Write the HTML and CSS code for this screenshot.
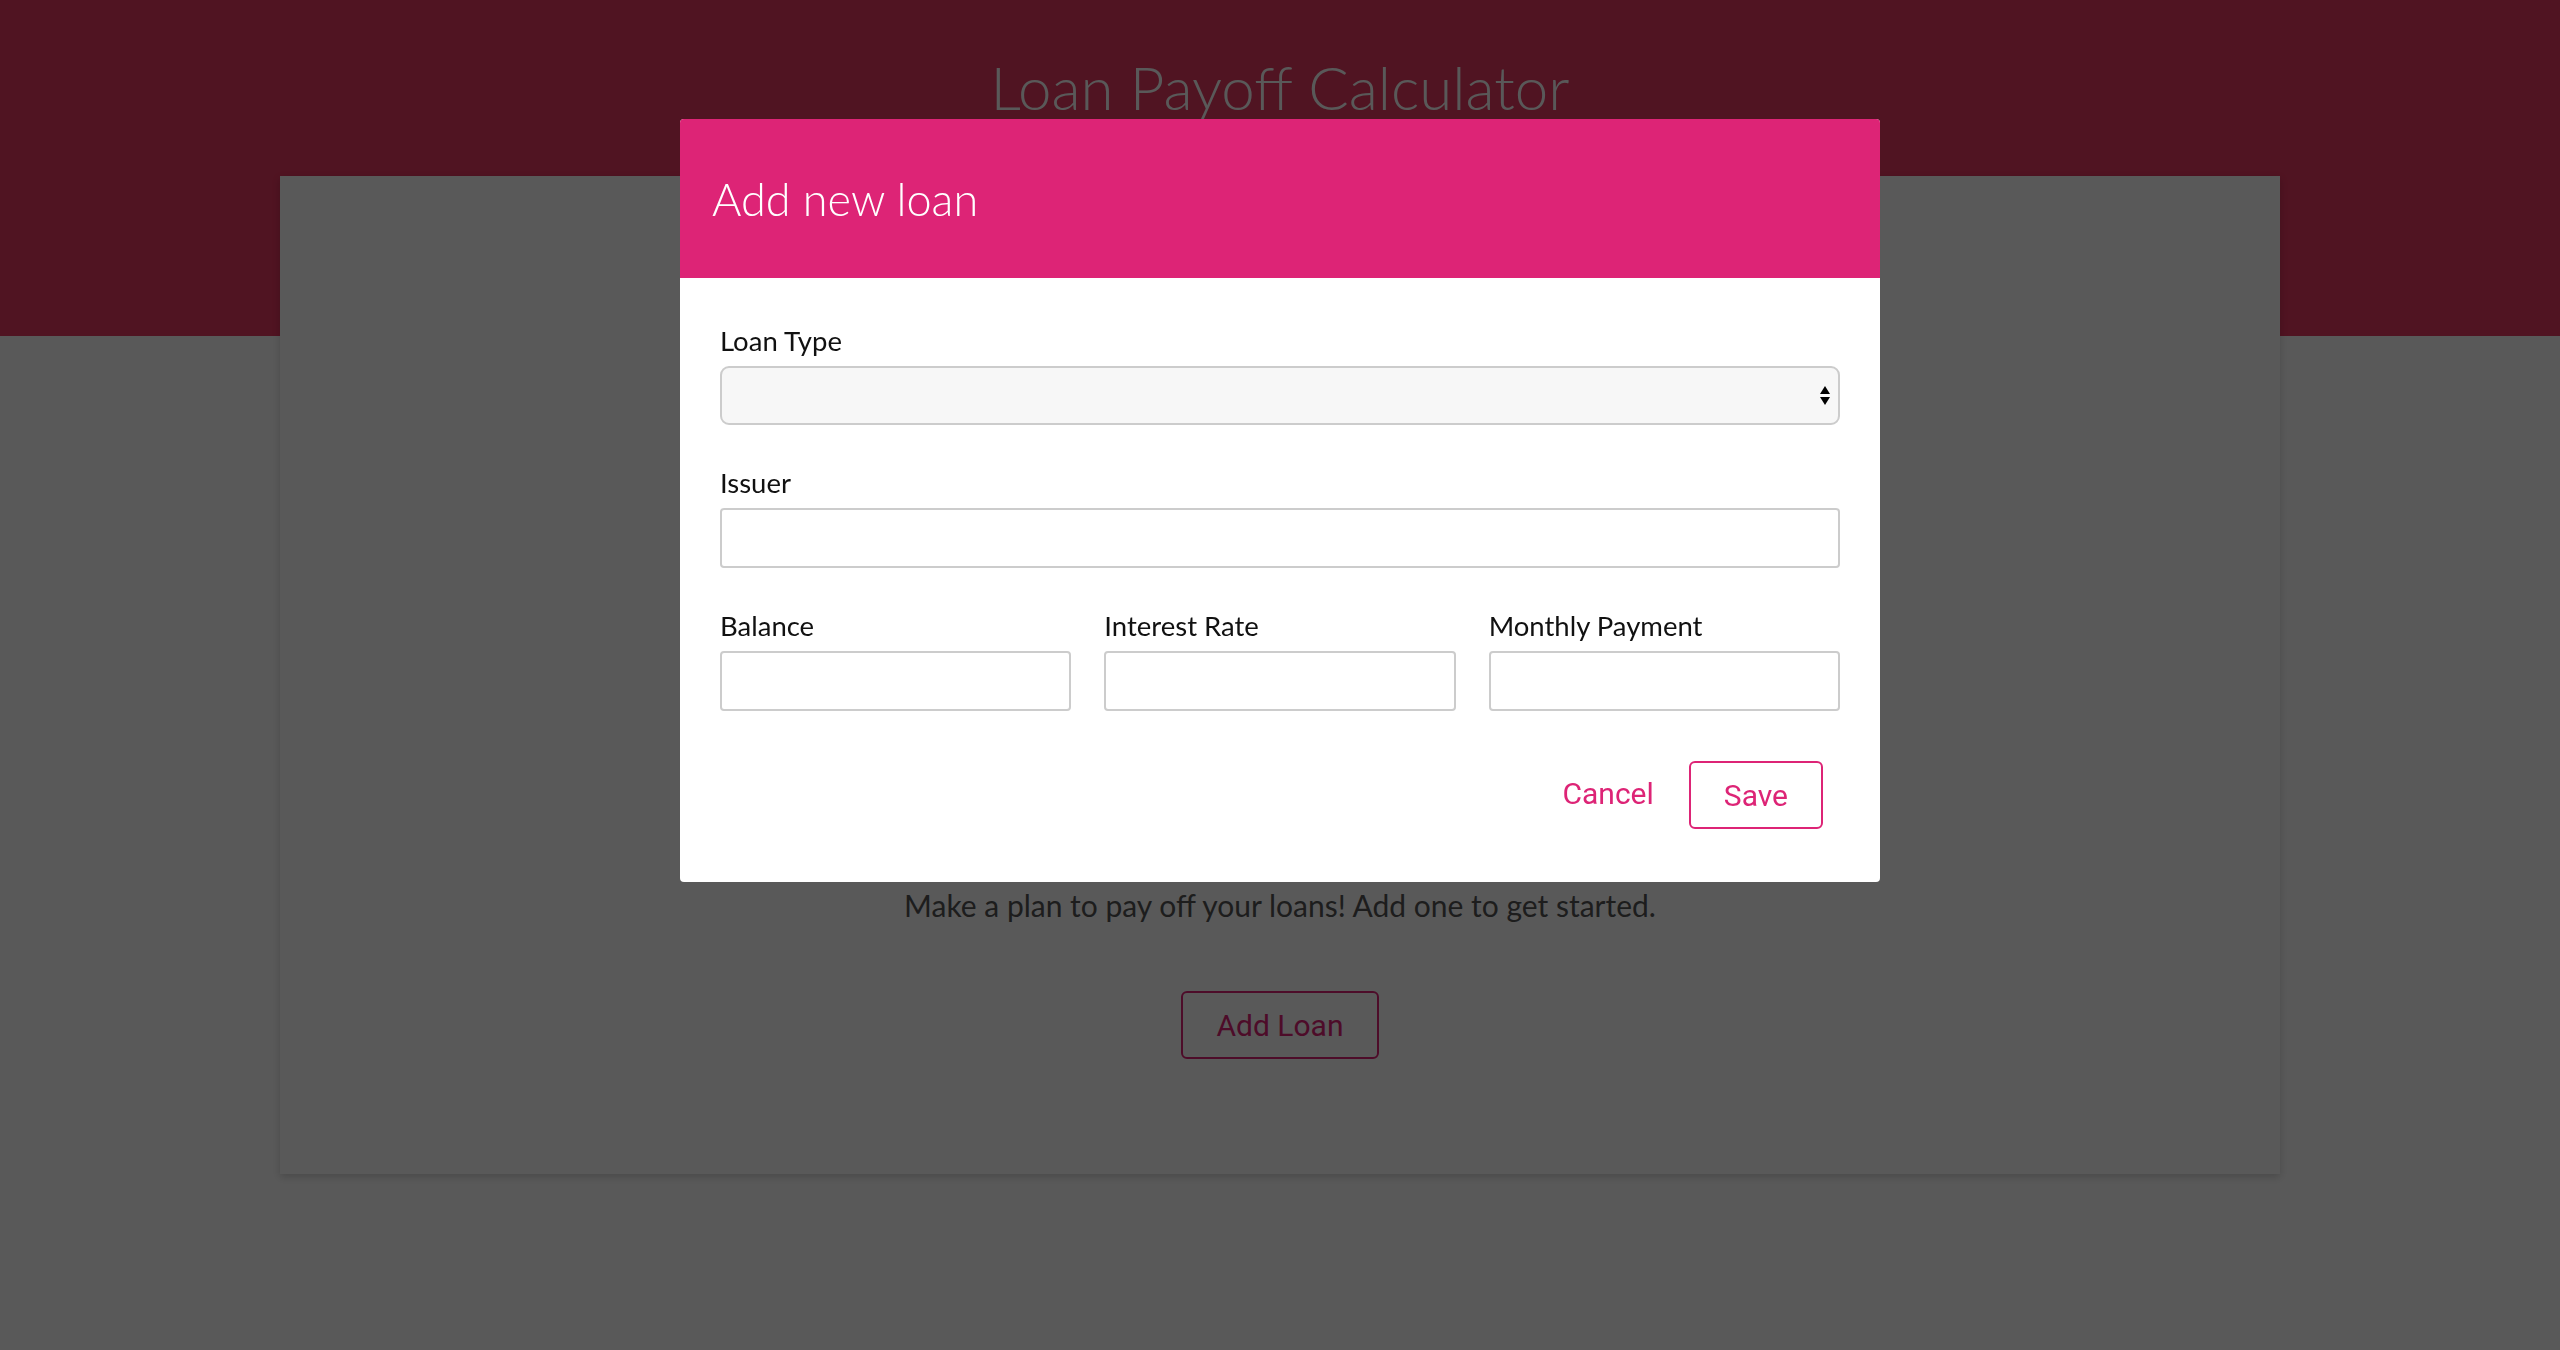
FILE: index.html
```html
<!DOCTYPE html>
<html lang="en">
<head>
<meta charset="utf-8">
<title>Loan Payoff Calculator</title>
<link rel="stylesheet" href="styles.css">
</head>
<body>
<header class="band">
  <h1 class="app-title">Loan Payoff Calculator</h1>
</header>
<main class="card">
  <p class="empty-text">Make a plan to pay off your loans! Add one to get started.</p>
  <button class="btn btn-outline" type="button">Add Loan</button>
</main>

<div class="overlay">
  <div class="modal">
    <div class="modal-header">
      <h2 class="modal-title">Add new loan</h2>
    </div>
    <form class="modal-body">
      <div class="form-group">
        <label class="form-label">Loan Type</label>
        <div class="select-wrap">
          <select class="form-select"><option></option></select>
          <svg class="select-arrows" width="10" height="20" viewBox="0 0 10 20"><path d="M5 0 L10 8 L0 8 Z M0 11 L10 11 L5 19 Z" fill="#000"/></svg>
        </div>
      </div>
      <div class="form-group">
        <label class="form-label">Issuer</label>
        <input class="form-input" type="text">
      </div>
      <div class="form-row">
        <div class="form-group">
          <label class="form-label">Balance</label>
          <input class="form-input" type="text">
        </div>
        <div class="form-group">
          <label class="form-label">Interest Rate</label>
          <input class="form-input" type="text">
        </div>
        <div class="form-group">
          <label class="form-label">Monthly Payment</label>
          <input class="form-input" type="text">
        </div>
      </div>
      <div class="modal-footer">
        <button class="btn btn-text" type="button">Cancel</button>
        <button class="btn btn-outline" type="button">Save</button>
      </div>
    </form>
  </div>
</div>
</body>
</html>
```

FILE: styles.css
```css
* { box-sizing: border-box; }

html, body {
  margin: 0;
  padding: 0;
}

body {
  background: #ffffff;
  font-family: "Lato", "Open Sans", sans-serif;
  color: #555555;
  min-height: 1350px;
}

.band {
  background: #e53961;
  height: 336px;
  padding-top: 51px;
}

.app-title {
  margin: 0;
  text-align: center;
  color: #ffffff;
  font-family: "Lato", sans-serif;
  font-weight: 300;
  font-size: 60px;
  line-height: 72px;
}

.card {
  width: 2000px;
  height: 998px;
  margin: -160px auto 0;
  background: #ffffff;
  box-shadow: 0 3px 8px rgba(0, 0, 0, 0.18);
  display: flex;
  flex-direction: column;
  align-items: center;
  padding-top: 709px;
}

.empty-text {
  margin: 0;
  font-size: 30px;
  line-height: 40px;
  color: #555555;
}

.btn {
  font-family: "Roboto", "Liberation Sans", sans-serif;
  font-size: 30px;
  font-weight: 400;
  height: 68px;
  padding: 0 33px;
  border: 2px solid transparent;
  border-radius: 6px;
  background: transparent;
  color: #dd2476;
  cursor: pointer;
}

.card .btn {
  margin-top: 66px;
}

.btn-outline {
  border-color: #dd2476;
}

.overlay {
  position: fixed;
  inset: 0;
  background: rgba(0, 0, 0, 0.65);
  display: flex;
  justify-content: center;
  align-items: flex-start;
  padding-top: 119px;
}

.modal {
  width: 1200px;
  background: #ffffff;
  border-radius: 4px;
  overflow: hidden;
}

.modal-header {
  background: #dd2476;
  height: 159px;
  display: flex;
  align-items: center;
  padding-left: 32px;
}

.modal-title {
  margin: 0;
  color: #ffffff;
  font-weight: 300;
  font-size: 45px;
  line-height: 56px;
}

.modal-body {
  padding: 46px 40px 53px;
}

.form-group {
  display: flex;
  flex-direction: column;
  margin-bottom: 41px;
}

.form-label {
  font-size: 27.5px;
  line-height: 34px;
  color: #111111;
  margin-bottom: 8px;
}

.select-wrap {
  position: relative;
}

.form-select {
  appearance: none;
  -webkit-appearance: none;
  width: 100%;
  height: 59px;
  background: #f7f7f7;
  border: 2px solid #cccccc;
  border-radius: 9px;
  font-size: 28px;
  padding: 0 16px;
}

.select-arrows {
  position: absolute;
  right: 10px;
  top: 20px;
}

.form-input {
  width: 100%;
  height: 60px;
  border: 2px solid #cccccc;
  border-radius: 4px;
  background: #ffffff;
  font-size: 28px;
  padding: 0 14px;
}

.form-row {
  display: grid;
  grid-template-columns: repeat(3, 1fr);
  column-gap: 33px;
}

.form-row .form-group {
  margin-bottom: 50px;
}

.modal-footer {
  display: flex;
  justify-content: flex-end;
  padding-right: 17px;
}

.btn-text {
  padding-bottom: 4px;
}
```
